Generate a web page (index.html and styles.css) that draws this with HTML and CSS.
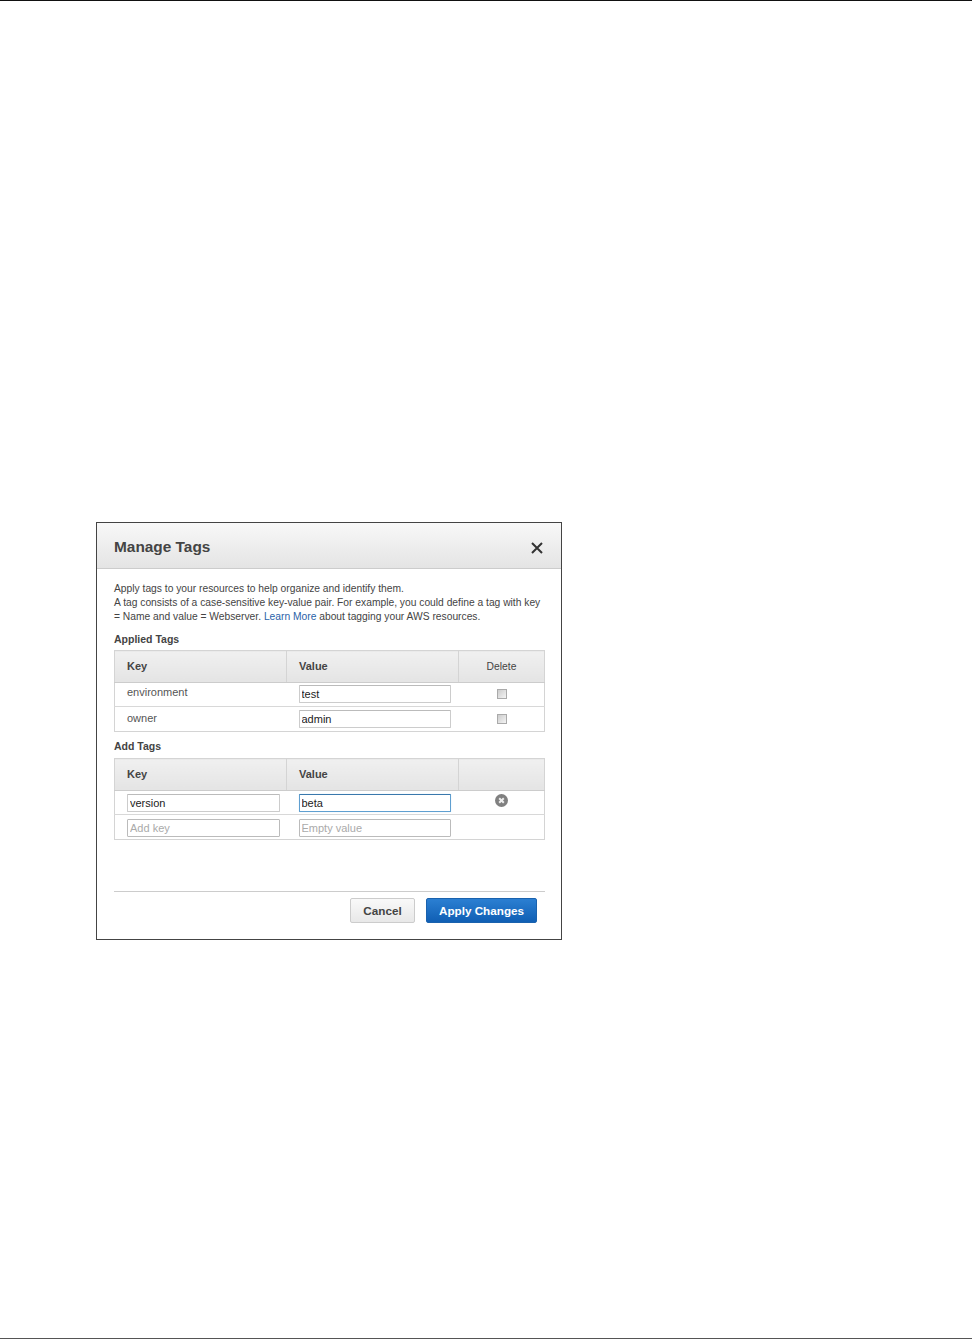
FILE: index.html
```html
<!DOCTYPE html>
<html lang="en">
<head>
<meta charset="utf-8">
<title>Manage Tags</title>
<link rel="stylesheet" href="styles.css">
</head>
<body>
<main class="page">
  <section class="dialog">
    <header class="dialog-head">
      <h1>Manage Tags</h1>
      <svg class="close" width="12" height="12" viewBox="0 0 12 12"><path d="M1 1 11 11M11 1 1 11" stroke="#333" stroke-width="2" fill="none"/></svg>
    </header>
    <div class="dialog-body">
      <p class="intro">Apply tags to your resources to help organize and identify them.<br>A tag consists of a case-sensitive key-value pair. For example, you could define a tag with key<br>= Name and value = Webserver. <a href="#">Learn More</a> about tagging your AWS resources.</p>
      <h2 class="applied-title">Applied Tags</h2>
      <table class="tags applied">
        <thead><tr><th class="c-key">Key</th><th class="c-val">Value</th><th class="c-del">Delete</th></tr></thead>
        <tbody>
          <tr class="row-a"><td class="key-text">environment</td><td><input class="field" value="test"></td><td class="mid"><span class="check"></span></td></tr>
          <tr class="row-b"><td class="key-text">owner</td><td><input class="field" value="admin"></td><td class="mid"><span class="check"></span></td></tr>
        </tbody>
      </table>
      <h2 class="add-title">Add Tags</h2>
      <table class="tags add">
        <thead><tr><th class="c-key">Key</th><th class="c-val">Value</th><th class="c-del"></th></tr></thead>
        <tbody>
          <tr class="row-a"><td><input class="field wide" value="version"></td><td><input class="field focus" value="beta"></td><td class="mid"><svg class="remove" width="13" height="13" viewBox="0 0 13 13"><circle cx="6.5" cy="6.5" r="6.5" fill="#808080"/><path d="M4.2 4.2 8.8 8.8M8.8 4.2 4.2 8.8" stroke="#eee" stroke-width="2"/></svg></td></tr>
          <tr class="row-b"><td><input class="field wide empty" placeholder="Add key"></td><td><input class="field empty" placeholder="Empty value"></td><td></td></tr>
        </tbody>
      </table>
      <footer class="actions">
        <button class="btn cancel" type="button">Cancel</button>
        <button class="btn apply" type="button">Apply Changes</button>
      </footer>
    </div>
  </section>
</main>
</body>
</html>
```
FILE: styles.css
```css
* { box-sizing: border-box; }
html, body { margin: 0; padding: 0; background: #fff; }
body { font-family: "Liberation Sans", Arial, sans-serif; color: #444; }
.page {
  height: 1339px;
  border-top: 1px solid #111;
  border-bottom: 1px solid #555;
  padding: 521px 0 0 96px;
}
.dialog {
  width: 466px;
  height: 418px;
  border: 1px solid #444;
  background: #fff;
}
.dialog-head {
  height: 46px;
  display: flex;
  align-items: center;
  justify-content: space-between;
  padding: 0 18px 0 17px;
  background: linear-gradient(#f8f8f8, #e4e4e4);
  border-bottom: 1px solid #ccc;
}
.dialog-head h1 { margin: 3px 0 0; font-size: 15.4px; font-weight: bold; color: #444; }
.close { display: block; margin-top: 4px; }
.dialog-body { padding: 13px 16px 0 17px; }
.intro { margin: 0; font-size: 10.27px; line-height: 14px; color: #444; }
.intro a { color: #2a62a8; text-decoration: none; }
h2 { margin: 0; font-size: 10.5px; line-height: 14px; font-weight: bold; color: #444; }
.applied-title { margin-top: 8px; }
.add-title { margin-top: 7px; }
.tags {
  width: 431px;
  table-layout: fixed;
  border-collapse: collapse;
  border: 1px solid #d4d4d4;
  font-size: 11px;
  color: #555;
}
.applied { margin-top: 4px; }
.add { margin-top: 5px; }
.tags th {
  height: 32px;
  padding: 0 0 2px 12px;
  text-align: left;
  font-weight: bold;
  background: linear-gradient(#f0f0f0, #e4e4e4);
  border-left: 1px solid #d4d4d4;
  border-bottom: 1px solid #ccc;
  color: #444;
}
.tags th.c-key { width: 172px; border-left: 0; }
.tags th.c-val { width: 172px; }
.tags th.c-del { font-weight: normal; font-size: 10.3px; text-align: center; padding: 0 0 1px; }
.tags td {
  padding: 3px 7px 0 12px;
  vertical-align: top;
  border-top: 1px solid #d8d8d8;
}
.tags tbody tr:first-child td { border-top: 0; }
.row-a td { height: 24px; }
.row-b td { height: 25px; }
.applied .row-a td { padding-top: 2px; }
.add .row-b td { padding-top: 4px; }
.tags td.key-text { padding-top: 2px; line-height: 14px; }
.applied .row-b td.key-text { padding-top: 4px; }
.tags td.mid { text-align: center; padding: 6px 0 0; line-height: 0; }
.applied .row-b td.mid { padding-top: 7px; }
.field {
  display: block;
  width: 152px;
  height: 18px;
  padding: 0 2px;
  border: 1px solid #ccc;
  border-top-color: #bbb;
  border-radius: 1px;
  background: #fff;
  font: 11px "Liberation Sans", Arial, sans-serif;
  color: #222;
  outline: 0;
}
.wide { width: 153px; }
.focus { border-color: #5f9fd0; border-top-color: #3a78ac; box-shadow: 0 0 1px #a8d0ee; }
.empty { border-color: #bbb; }
.empty::placeholder { color: #aaa; opacity: 1; }
.check {
  display: inline-block;
  width: 10px;
  height: 10px;
  margin-left: 1px;
  border: 1px solid #aaa;
  background: linear-gradient(135deg, #ccc, #f4f4f4);
}
.tags.add td.mid { padding-top: 3px; }
.remove { display: inline-block; }
.actions {
  display: flex;
  justify-content: flex-end;
  gap: 11px;
  margin-top: 51px;
  padding: 6px 8px 0 0;
  border-top: 1px solid #ccc;
}
.btn {
  height: 25px;
  padding: 0;
  border-radius: 2px;
  font: bold 11.7px "Liberation Sans", Arial, sans-serif;
}
.cancel {
  width: 65px;
  color: #444;
  border: 1px solid #ccc;
  background: linear-gradient(#f9f9f9, #e8e8e8);
}
.apply {
  width: 111px;
  color: #fff;
  border: 1px solid #1a62ae;
  background: linear-gradient(#2b7fd2, #105fb4);
}
```
